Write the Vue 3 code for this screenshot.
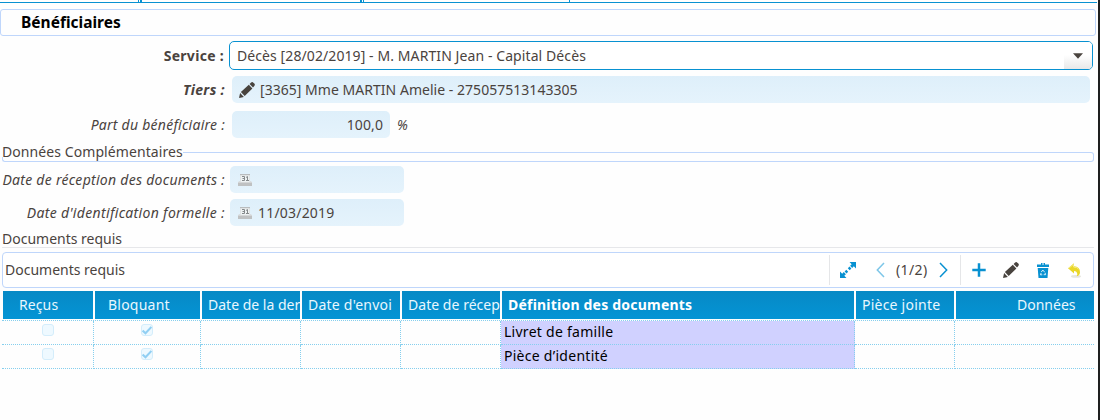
<script setup>
const columns = [
  { label: 'Reçus', key: 'recus' },
  { label: 'Bloquant', key: 'bloquant' },
  { label: 'Date de la der', key: 'demande' },
  { label: "Date d'envoi", key: 'envoi' },
  { label: 'Date de récep', key: 'recep' },
  { label: 'Définition des documents', key: 'definition' },
  { label: 'Pièce jointe', key: 'piece' },
  { label: 'Données', key: 'donnees' }
]
const documents = ['Livret de famille', 'Pièce d’identité']
</script>

<template>
  <div class="window">
    <main class="page">
      <div class="tabs"><i class="t1"></i><i class="t2"></i><i class="t3"></i><i class="t4"></i></div>
      <h1 class="title">Bénéficiaires</h1>

      <div class="row service">
        <label class="bold">Service :</label>
        <div class="select">
          <span>Décès [28/02/2019] - M. MARTIN Jean - Capital Décès</span>
          <div class="arrow"><svg width="10" height="6" viewBox="0 0 10 6"><path d="M0 .3h10L5 5.8z" fill="#4a443f" /></svg></div>
        </div>
      </div>
      <div class="row tiers">
        <label class="bold italic">Tiers :</label>
        <div class="field wide">
          <svg class="pencil" width="16" height="16" viewBox="0 0 16 16" fill="#48433e"><path d="M0 16l1.100-5L4.900 15zM1.900 10.100l7.900-7.300 3.600 3.700-7.700 7.600zM10.600 2l1.500-1.400q1.200-1 2.300.1l.9.9q1.100 1.200 0 2.300l-1.300 1.500z" /></svg>
          <span>[3365] Mme MARTIN Amelie - 275057513143305</span>
        </div>
      </div>
      <div class="row part">
        <label class="italic">Part du bénéficiaire :</label>
        <div class="field amount">100,0</div>
        <span class="unit">%</span>
      </div>

      <div class="legend"><span>Données Complémentaires</span><i></i></div>

      <div class="row date reception">
        <label class="italic">Date de réception des documents :</label>
        <div class="field">
          <svg class="cal" width="14" height="12" viewBox="0 0 14 12"><path d="M2 0h10v7l2 1v4H0V8l2-1z" fill="#d4d6d7" /><path d="M2.500 1.500h9V8h-9z" fill="#eef2f3" /><path d="M0 9h14v3H0z" fill="#bfc1c2" /><path d="M2 .5h10" stroke="#b9bcbe" /><path d="M4 2.500h2.500v4H4M4.500 4.500h2M8 3.500l1.500-1v4M8 6.500h3" fill="none" stroke="#85898b" /></svg>
        </div>
      </div>
      <div class="row date ident">
        <label class="italic">Date d'identification formelle :</label>
        <div class="field">
          <svg class="cal" width="14" height="12" viewBox="0 0 14 12"><path d="M2 0h10v7l2 1v4H0V8l2-1z" fill="#d4d6d7" /><path d="M2.500 1.500h9V8h-9z" fill="#eef2f3" /><path d="M0 9h14v3H0z" fill="#bfc1c2" /><path d="M2 .5h10" stroke="#b9bcbe" /><path d="M4 2.500h2.500v4H4M4.500 4.500h2M8 3.500l1.500-1v4M8 6.500h3" fill="none" stroke="#85898b" /></svg>
          <span>11/03/2019</span>
        </div>
      </div>

      <h2 class="section">Documents requis</h2>
      <div class="toolbar">
        <span class="name">Documents requis</span>
        <div class="nav">
          <svg class="expand" width="16" height="16" viewBox="0 0 16 16" fill="#0891d1"><path d="M9.500 0H16v6.500l-2.200-2.200-1.600 1.600-2.100-2.100 1.600-1.600zM0 16V9.500l2.200 2.200 1.600-1.600 2.100 2.100-1.600 1.600L6.500 16z" /><path d="M9.500 4.600l1.900 1.900-1.700 1.700-1.900-1.900zM6.300 7.800l1.900 1.900-1.700 1.700-1.900-1.900z" /></svg>
          <svg class="prev" width="9" height="16" viewBox="0 0 9 16"><path d="M8 1L1.300 8 8 15" fill="none" stroke="#7dc6e8" stroke-width="1.5" /></svg>
          <span class="pager">(1/2)</span>
          <svg class="next" width="9" height="16" viewBox="0 0 9 16"><path d="M1 1l6.700 7L1 15" fill="none" stroke="#0891d1" stroke-width="1.5" /></svg>
        </div>
        <div class="actions">
          <svg width="14" height="14" viewBox="0 0 14 14"><path d="M7 .3v13.400M.3 7h13.400" stroke="#0891d1" stroke-width="2.5" /></svg>
          <svg class="edit" width="16" height="16" viewBox="0 0 16 16" fill="#48433e"><path d="M0 16l1.100-5L4.900 15zM1.900 10.100l7.900-7.300 3.600 3.700-7.700 7.600zM10.600 2l1.500-1.400q1.200-1 2.300.1l.9.9q1.100 1.200 0 2.300l-1.300 1.500z" /></svg>
          <svg class="bin" width="12" height="15" viewBox="0 0 12 15"><path d="M0 1.500h4V0h4v1.500h4V4H0zM.7 5h10.600l-.8 10h-9z" fill="#0891d1" /><path d="M5 1h2" stroke="#fff" /><path d="M4.300 9l1.500-2 1.700 2M8 9.700l.6 2H6.700M5.300 11.800H3.400l.8-1.900" fill="none" stroke="#d5effa" stroke-width="1" /></svg>
          <svg class="undo" width="14" height="15" viewBox="0 0 14 15"><ellipse cx="8" cy="13.4" rx="5" ry="1.3" fill="#e6e6df" /><path d="M0 5.200L6 .3v3q6 .5 6 6 0 3-3.300 4 1-1.500.4-3.300Q8.500 8.200 6 8v2.600z" fill="#ead728" /><path d="M1 5.100L5.500 1.400V4q3.500.1 5 2" fill="none" stroke="#f5eb83" stroke-width="1" /></svg>
        </div>
      </div>

      <div class="grid head">
        <div v-for="c in columns" :key="c.key" :class="['th', c.key]">{{ c.label }}</div>
      </div>
      <div class="body">
        <div v-for="d in documents" :key="d" class="line">
          <div class="td"><i class="check"></i></div>
          <div class="td mid"><i class="check"><svg width="10" height="9" viewBox="0 0 10 9"><path d="M.6 4.600L3.500 7.300 9.400 1" fill="none" stroke="#91cff3" stroke-width="2" /></svg></i></div>
          <div class="td"></div><div class="td"></div><div class="td"></div>
          <div class="td definition">{{ d }}</div>
          <div class="td"></div><div class="td"></div>
        </div>
      </div>
    </main>
    <aside class="edge"></aside>
  </div>
</template>

<style scoped>
* { box-sizing: border-box; }
.window { display: flex; width: 1100px; height: 420px; overflow: hidden; background: #fefefe; font: 14px/20px "Noto Sans", "Open Sans", sans-serif; color: #4a433e; }
.page { width: 1098px; }
.edge { width: 2px; background: #1e1f1f; }
svg { display: block; flex: none; }
.tabs { display: grid; grid-template-columns: 138px 222px 209px 1fr; width: 1097px; height: 3px; border-bottom: 1px solid #0891d1; }
.tabs i { height: 2px; }
.tabs .t2 { border-left: 1px solid #0891d1; box-shadow: inset 1px 0 #fff, inset 3px 0 #0891d1; }
.tabs .t3 { border-left: 2px solid #0891d1; box-shadow: inset 1px 0 #fff, inset 2px 0 #0891d1; }
.tabs .t4 { border-left: 1px solid #0891d1; }
.title { width: 1096px; height: 27px; margin: 6px 0 5px; padding-left: 20px; border: 1px solid #bfd6fb; border-radius: 3px; font-size: 15.5px; line-height: 24px; letter-spacing: 0; color: #000; }
.row { display: flex; align-items: center; height: 27px; }
label { width: 225px; text-align: right; letter-spacing: .25px; white-space: nowrap; }
.bold { font-weight: 700; }
.italic { font-style: italic; }
.service { height: 29px; }
.service label { width: 224px; letter-spacing: .3px; }
.select { display: flex; justify-content: space-between; width: 864px; height: 29px; margin-left: 5px; padding-left: 7px; border: 1px solid #0891d1; border-radius: 5px; line-height: 27px; letter-spacing: .09px; background: #fff; overflow: hidden; }
.arrow { display: flex; align-items: center; justify-content: center; width: 28px; background: linear-gradient(#fff 48%, #e8e8e8); }
.field { display: flex; align-items: center; height: 27px; border-radius: 5px; background: linear-gradient(#deeffa, #e5f3fc); }
.tiers { margin-top: 6px; }
.tiers label { letter-spacing: .35px; }
.wide { width: 858px; margin-left: 7px; padding-left: 7px; letter-spacing: .03px; }
.wide span { margin-left: 5px; }
.part { margin-top: 8px; }
.amount { width: 158px; margin-left: 7px; justify-content: flex-end; padding-right: 7px; letter-spacing: .1px; }
.unit { margin-left: 7px; font-size: 13.5px; font-style: italic; }
.legend { position: relative; display: flex; width: 1094px; height: 20px; margin-top: 4px; padding-left: 2px; letter-spacing: .08px; white-space: nowrap; }
.legend i { flex: 1; height: 10px; margin-top: 10px; border: 1px solid #bfd6fb; border-left: 0; border-radius: 0 3px 3px 0; }
.legend::after { content: ""; position: absolute; left: 2px; bottom: 0; width: 190px; height: 4px; border: 1px solid #bfd6fb; border-width: 0 0 1px 1px; border-radius: 0 0 0 3px; }
.reception { margin-top: 4px; }
.ident { margin-top: 6px; }
.date .field { width: 174px; margin-left: 5px; padding-left: 8px; letter-spacing: .2px; }
.date .field span { margin-left: 6px; }
.reception label { letter-spacing: .28px; }
.ident label { letter-spacing: .33px; }
.section { width: 1092px; height: 21px; margin: 1px 0 4px 2px; border-bottom: 1px solid #e6e7ea; font-size: 14px; font-weight: 400; line-height: 24px; letter-spacing: 0; }
.toolbar { display: flex; align-items: center; width: 1092px; height: 36px; margin-left: 2px; padding-left: 2px; border: 1px solid #bfd6fb; border-radius: 4px; background: #fff; }
.name { width: 824px; }
.nav { display: flex; align-items: center; width: 131px; height: 30px; padding-left: 10px; border-left: 1px solid #e5e6e8; }
.prev { margin-left: 20px; }
.pager { width: 32px; margin-left: 11px; letter-spacing: .4px; }
.next { margin-left: 11px; }
.actions { display: flex; align-items: center; height: 30px; padding-left: 11px; border-left: 1px solid #e5e6e8; }
.edit { margin-left: 17px; }
.bin { margin-left: 18px; }
.undo { margin-left: 19px; }
.head { display: grid; grid-template-columns: 90px 105px 98px 98px 98px 352px 98px 138px; column-gap: 2px; width: 1091px; height: 28px; margin: 3px 0 0 3px; color: #e9f7fe; }
.th { padding-left: 6px; line-height: 27px; white-space: nowrap; overflow: hidden; background: linear-gradient(#0789c5, #0494d5); letter-spacing: .23px; }
.th.recus { padding-left: 16px; letter-spacing: .1px; }
.th.bloquant { padding-left: 13px; }
.th.demande { letter-spacing: 0; }
.th.recep { letter-spacing: .04px; }
.th.definition { color: #fff; font-weight: 700; letter-spacing: .21px; }
.th.donnees { padding-left: 61px; letter-spacing: 0; }
.body { width: 1092px; margin: 1px 0 0 2px; border-top: 1px dotted #86cfee; }
.line { display: grid; grid-template-columns: 92px 107px 100px 100px 100px 354px 100px 139px; height: 24px; }
.td { height: 24px; border-bottom: 1px dotted #86cfee; border-right: 1px dotted #86cfee; }
.td:last-child { border-right: 0; }
.td:first-child { padding-left: 40px; }
.mid { padding-left: 47px; }
.check { display: grid; place-items: center; width: 12px; height: 12px; margin-top: 3px; border: 1px solid #d4edfb; border-radius: 3px; background: #eef9ff; }
.td.definition { padding-left: 3px; line-height: 22px; letter-spacing: .27px; color: #000; background: #d0d1ff; }
</style>
